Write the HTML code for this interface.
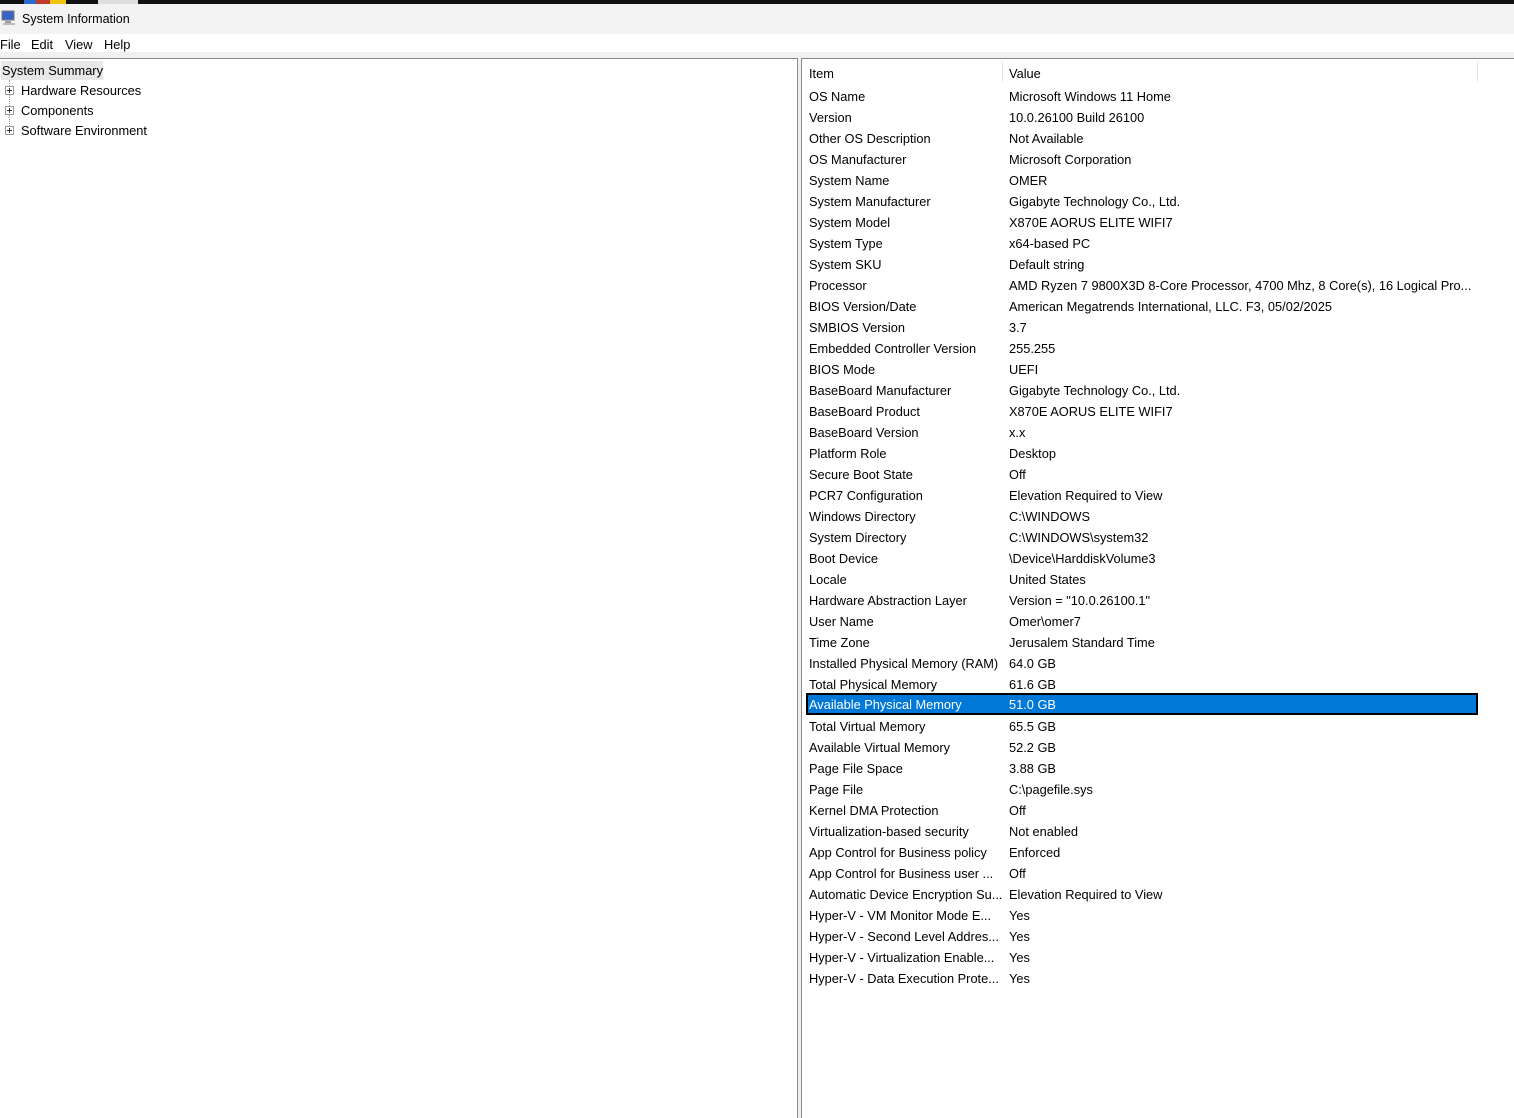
<!DOCTYPE html>
<html><head><meta charset="utf-8"><style>
*{margin:0;padding:0;box-sizing:border-box}
body{width:1514px;height:1118px;background:#fff;font-family:"Liberation Sans",sans-serif;font-size:12.8px;color:#000;position:relative;overflow:hidden}
.abs{position:absolute}
.row{position:absolute;left:806px;width:672px;height:21px;line-height:21px;white-space:nowrap}
.row span{position:absolute}
.row .a{left:3px}.row .b{left:203px}
.tree div{position:absolute;left:21px;white-space:nowrap;line-height:20px}
.plus{position:absolute;left:5px;width:9px;height:9px;border:1px solid #999;background:#fff}
.plus:before{content:"";position:absolute;left:1px;top:3px;width:5px;height:1px;background:#333}
.plus:after{content:"";position:absolute;left:3px;top:1px;width:1px;height:5px;background:#333}
.m{position:absolute;top:37px}
</style></head><body>
<div class="abs" style="left:0;top:0;width:1514px;height:4px;background:#111"></div>
<div class="abs" style="left:24px;top:0;width:12px;height:4px;background:#2a6bd1"></div>
<div class="abs" style="left:36px;top:0;width:14px;height:4px;background:#c0392b"></div>
<div class="abs" style="left:50px;top:0;width:16px;height:4px;background:#f1c40f"></div>
<div class="abs" style="left:98px;top:0;width:40px;height:4px;background:#ddd"></div>
<div class="abs" style="left:0;top:4px;width:1514px;height:30px;background:#f3f3f3"></div>
<svg class="abs" style="left:1px;top:10px" width="16" height="16" viewBox="0 0 16 16"><rect x="1" y="1" width="12" height="9" fill="#3a63c8" stroke="#777"/><rect x="4" y="11" width="6" height="2" fill="#999"/><rect x="2" y="13" width="12" height="2" fill="#bbb"/></svg>
<div class="abs" style="left:22px;top:12px;font-size:12.5px">System Information</div>
<div class="abs" style="left:0;top:34px;width:1514px;height:18px;background:#fff"></div>
<div class="m" style="left:0">File</div><div class="m" style="left:31px">Edit</div><div class="m" style="left:65px">View</div><div class="m" style="left:104px">Help</div>
<div class="abs" style="left:0;top:52px;width:1514px;height:6px;background:#f0f0f0"></div>
<div class="abs" style="left:0;top:58px;width:797px;height:1px;background:#828790"></div>
<div class="abs" style="left:801px;top:58px;width:713px;height:1px;background:#828790"></div>
<div class="abs" style="left:797px;top:58px;width:1px;height:1060px;background:#8a8a8a"></div>
<div class="abs" style="left:798px;top:58px;width:3px;height:1060px;background:#f0f0f0"></div>
<div class="abs" style="left:801px;top:58px;width:1px;height:1060px;background:#8a8a8a"></div>
<div class="tree">
<div class="abs" style="left:1px;top:61px;height:19px;width:102px;background:#e8e8e8"></div>
<div style="left:2px;top:61px">System Summary</div>
<div class="abs" style="left:9px;top:80px;width:1px;height:52px;border-left:1px dotted #999"></div>
<span class="plus" style="top:86px"></span><div style="top:81px">Hardware Resources</div>
<span class="plus" style="top:106px"></span><div style="top:101px">Components</div>
<span class="plus" style="top:126px"></span><div style="top:121px">Software Environment</div>
</div>
<div class="abs" style="left:1002px;top:62px;width:1px;height:20px;background:#e5e5e5"></div>
<div class="abs" style="left:1477px;top:62px;width:1px;height:20px;background:#e5e5e5"></div>
<div class="row" style="top:63px"><span class="a">Item</span><span class="b">Value</span></div>
<div class="row" style="top:86px"><span class="a">OS Name</span><span class="b">Microsoft Windows 11 Home</span></div>
<div class="row" style="top:107px"><span class="a">Version</span><span class="b">10.0.26100 Build 26100</span></div>
<div class="row" style="top:128px"><span class="a">Other OS Description</span><span class="b">Not Available</span></div>
<div class="row" style="top:149px"><span class="a">OS Manufacturer</span><span class="b">Microsoft Corporation</span></div>
<div class="row" style="top:170px"><span class="a">System Name</span><span class="b">OMER</span></div>
<div class="row" style="top:191px"><span class="a">System Manufacturer</span><span class="b">Gigabyte Technology Co., Ltd.</span></div>
<div class="row" style="top:212px"><span class="a">System Model</span><span class="b">X870E AORUS ELITE WIFI7</span></div>
<div class="row" style="top:233px"><span class="a">System Type</span><span class="b">x64-based PC</span></div>
<div class="row" style="top:254px"><span class="a">System SKU</span><span class="b">Default string</span></div>
<div class="row" style="top:275px"><span class="a">Processor</span><span class="b">AMD Ryzen 7 9800X3D 8-Core Processor, 4700 Mhz, 8 Core(s), 16 Logical Pro...</span></div>
<div class="row" style="top:296px"><span class="a">BIOS Version/Date</span><span class="b">American Megatrends International, LLC. F3, 05/02/2025</span></div>
<div class="row" style="top:317px"><span class="a">SMBIOS Version</span><span class="b">3.7</span></div>
<div class="row" style="top:338px"><span class="a">Embedded Controller Version</span><span class="b">255.255</span></div>
<div class="row" style="top:359px"><span class="a">BIOS Mode</span><span class="b">UEFI</span></div>
<div class="row" style="top:380px"><span class="a">BaseBoard Manufacturer</span><span class="b">Gigabyte Technology Co., Ltd.</span></div>
<div class="row" style="top:401px"><span class="a">BaseBoard Product</span><span class="b">X870E AORUS ELITE WIFI7</span></div>
<div class="row" style="top:422px"><span class="a">BaseBoard Version</span><span class="b">x.x</span></div>
<div class="row" style="top:443px"><span class="a">Platform Role</span><span class="b">Desktop</span></div>
<div class="row" style="top:464px"><span class="a">Secure Boot State</span><span class="b">Off</span></div>
<div class="row" style="top:485px"><span class="a">PCR7 Configuration</span><span class="b">Elevation Required to View</span></div>
<div class="row" style="top:506px"><span class="a">Windows Directory</span><span class="b">C:\WINDOWS</span></div>
<div class="row" style="top:527px"><span class="a">System Directory</span><span class="b">C:\WINDOWS\system32</span></div>
<div class="row" style="top:548px"><span class="a">Boot Device</span><span class="b">\Device\HarddiskVolume3</span></div>
<div class="row" style="top:569px"><span class="a">Locale</span><span class="b">United States</span></div>
<div class="row" style="top:590px"><span class="a">Hardware Abstraction Layer</span><span class="b">Version = "10.0.26100.1"</span></div>
<div class="row" style="top:611px"><span class="a">User Name</span><span class="b">Omer\omer7</span></div>
<div class="row" style="top:632px"><span class="a">Time Zone</span><span class="b">Jerusalem Standard Time</span></div>
<div class="row" style="top:653px"><span class="a">Installed Physical Memory (RAM)</span><span class="b">64.0 GB</span></div>
<div class="row" style="top:674px"><span class="a">Total Physical Memory</span><span class="b">61.6 GB</span></div>
<div class="row" style="top:693px;height:22px;background:#0078d7;border:2px solid #000;color:#fff;line-height:20px"><span class="a" style="left:1px">Available Physical Memory</span><span class="b" style="left:201px">51.0 GB</span></div>
<div class="row" style="top:716px"><span class="a">Total Virtual Memory</span><span class="b">65.5 GB</span></div>
<div class="row" style="top:737px"><span class="a">Available Virtual Memory</span><span class="b">52.2 GB</span></div>
<div class="row" style="top:758px"><span class="a">Page File Space</span><span class="b">3.88 GB</span></div>
<div class="row" style="top:779px"><span class="a">Page File</span><span class="b">C:\pagefile.sys</span></div>
<div class="row" style="top:800px"><span class="a">Kernel DMA Protection</span><span class="b">Off</span></div>
<div class="row" style="top:821px"><span class="a">Virtualization-based security</span><span class="b">Not enabled</span></div>
<div class="row" style="top:842px"><span class="a">App Control for Business policy</span><span class="b">Enforced</span></div>
<div class="row" style="top:863px"><span class="a">App Control for Business user ...</span><span class="b">Off</span></div>
<div class="row" style="top:884px"><span class="a">Automatic Device Encryption Su...</span><span class="b">Elevation Required to View</span></div>
<div class="row" style="top:905px"><span class="a">Hyper-V - VM Monitor Mode E...</span><span class="b">Yes</span></div>
<div class="row" style="top:926px"><span class="a">Hyper-V - Second Level Addres...</span><span class="b">Yes</span></div>
<div class="row" style="top:947px"><span class="a">Hyper-V - Virtualization Enable...</span><span class="b">Yes</span></div>
<div class="row" style="top:968px"><span class="a">Hyper-V - Data Execution Prote...</span><span class="b">Yes</span></div>
</body></html>
